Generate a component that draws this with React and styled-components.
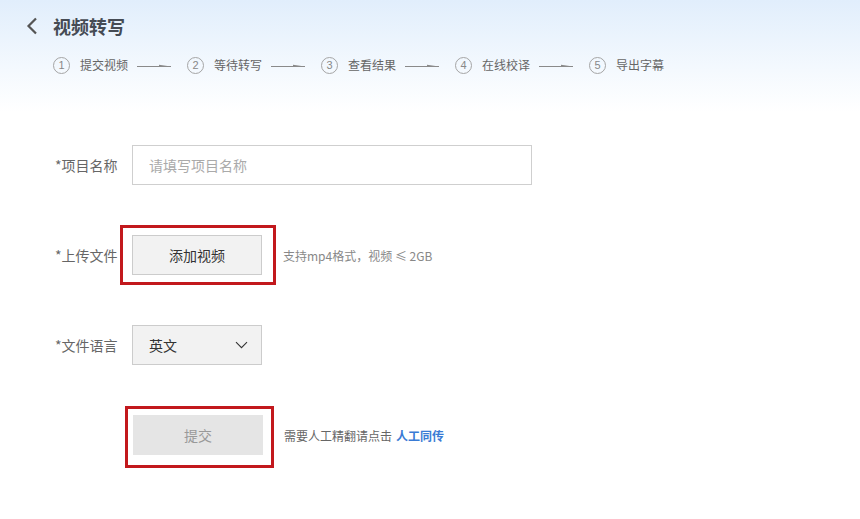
import React from 'react';
import styled, { createGlobalStyle } from 'styled-components';

const steps = ['提交视频', '等待转写', '查看结果', '在线校译', '导出字幕'];

const GlobalStyle = createGlobalStyle`
  html, body {
    margin: 0;
    padding: 0;
  }
  body {
    font-family: "Noto Sans CJK SC", "Microsoft YaHei", "Liberation Sans", sans-serif;
    color: #333;
  }
  * {
    box-sizing: border-box;
  }
`;

export default function App() {
  return (
    <Page>
      <GlobalStyle />
      <Header>
        <TitleRow>
          <BackIcon width="12" height="18" viewBox="0 0 12 18">
            <path d="M10 1.5 L2.5 9 L10 16.5" fill="none" stroke="#555" strokeWidth="2.2" />
          </BackIcon>
          <Title>视频转写</Title>
        </TitleRow>
        <Steps>
          {steps.map((s, i) => (
            <Step key={s}>
              <Num>{i + 1}</Num>
              <StepText>{s}</StepText>
              {i < steps.length - 1 && (
                <Arrow width="34" height="6" viewBox="0 0 34 6">
                  <line x1="0" y1="4.5" x2="34" y2="4.5" stroke="#8a8a8a" strokeWidth="1" />
                  <polygon points="22,2.8 34,4.5 22,4.5" fill="#8a8a8a" />
                </Arrow>
              )}
            </Step>
          ))}
        </Steps>
      </Header>

      <Form>
        <Row>
          <Label>*项目名称</Label>
          <Input placeholder="请填写项目名称" />
        </Row>
        <Row>
          <Label>*上传文件</Label>
          <Marked>
            <Mark $t={-10} $r={-14} $b={-10} $l={-12} />
            <Button>添加视频</Button>
          </Marked>
          <Hint>支持mp4格式，视频 ≤ 2GB</Hint>
        </Row>
        <Row>
          <Label>*文件语言</Label>
          <Select>
            <span>英文</span>
            <svg width="13" height="8" viewBox="0 0 13 8">
              <path d="M1 1.2 L6.5 6.7 L12 1.2" fill="none" stroke="#333" strokeWidth="1.1" />
            </svg>
          </Select>
        </Row>
        <Row>
          <Label />
          <Marked $shift={1}>
            <Mark $t={-9} $r={-11} $b={-13} $l={-8} />
            <Submit>提交</Submit>
          </Marked>
          <Hint $dark>
            需要人工精翻请点击<Link>人工同传</Link>
          </Hint>
        </Row>
      </Form>
    </Page>
  );
}

const Page = styled.div`
  min-height: 519px;
  background: linear-gradient(180deg, #e1eefc 0px, #f4f9fe 70px, #ffffff 112px);
`;

const Header = styled.div`
  padding: 14px 0 0 26px;
`;

const TitleRow = styled.div`
  display: flex;
  align-items: center;
  height: 24px;
`;

const BackIcon = styled.svg`
  display: block;
  margin-right: 15px;
`;

const Title = styled.h1`
  margin: 0;
  font-size: 18px;
  font-weight: 700;
  color: #454b54;
  line-height: 24px;
`;

const Steps = styled.div`
  display: flex;
  align-items: center;
  height: 20px;
  margin: 17px 0 0 27px;
`;

const Step = styled.div`
  display: flex;
  align-items: center;
`;

const Num = styled.span`
  width: 17px;
  height: 17px;
  border: 1px solid #a5a5a5;
  border-radius: 50%;
  display: flex;
  align-items: center;
  justify-content: center;
  font-size: 11px;
  color: #888;
  font-family: "Liberation Sans", sans-serif;
  margin-right: 10px;
`;

const StepText = styled.span`
  font-size: 12px;
  color: #666;
  line-height: 20px;
  width: 48px;
  white-space: nowrap;
`;

const Arrow = styled.svg`
  display: block;
  margin: 0 16px 0 9px;
`;

const Form = styled.div`
  display: flex;
  flex-direction: column;
  gap: 50px;
  padding: 70px 0 0 55px;
`;

const Row = styled.div`
  display: flex;
  align-items: center;
  height: 40px;
`;

const Label = styled.label`
  width: 77px;
  flex: none;
  font-size: 14px;
  color: #666;
  white-space: nowrap;
`;

const Input = styled.input`
  width: 400px;
  height: 40px;
  border: 1px solid #cfcfcf;
  padding: 0 16px;
  font-size: 14px;
  font-family: inherit;
  color: #333;
  background: #fff;
  outline: none;
  &::placeholder {
    color: #aaa;
  }
`;

const Marked = styled.div`
  position: relative;
  margin-left: ${p => p.$shift || 0}px;
`;

const Mark = styled.div`
  position: absolute;
  top: ${p => p.$t}px;
  right: ${p => p.$r}px;
  bottom: ${p => p.$b}px;
  left: ${p => p.$l}px;
  border: 3px solid #c2181d;
  pointer-events: none;
`;

const Button = styled.button`
  display: block;
  width: 130px;
  height: 40px;
  border: 1px solid #cccccc;
  background: #f2f2f2;
  font-size: 14px;
  font-family: inherit;
  color: #333;
  cursor: pointer;
`;

const Submit = styled(Button)`
  border-color: #e5e5e5;
  background: #e5e5e5;
  color: #999;
`;

const Select = styled.div`
  width: 130px;
  height: 40px;
  border: 1px solid #cccccc;
  background: #f2f2f2;
  display: flex;
  align-items: center;
  justify-content: space-between;
  padding: 0 13px 0 16px;
  font-size: 14px;
  color: #333;
`;

const Hint = styled.span`
  margin-left: 21px;
  font-size: 12px;
  color: ${p => (p.$dark ? '#666' : '#888')};
  white-space: nowrap;
`;

const Link = styled.a`
  margin-left: 4px;
  color: #3a7bd5;
  font-weight: 700;
  cursor: pointer;
`;
